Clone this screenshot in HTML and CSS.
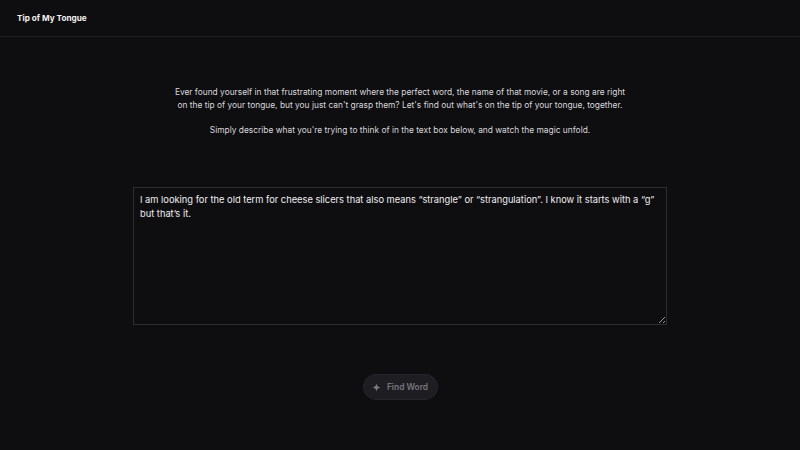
FILE: index.html
```html
<!DOCTYPE html>
<html>
<head>
<meta charset="utf-8">
<link rel="stylesheet" href="styles.css">
</head>
<body>
<header class="header"><span class="brand">Tip of My Tongue</span></header>
<main class="main">
  <div class="intro">
    <p>Ever found yourself in that frustrating moment where the perfect word, the name of that movie, or a song are right on the tip of your tongue, but you just can't grasp them? Let's find out what's on the tip of your tongue, together.</p>
    <p>Simply describe what you're trying to think of in the text box below, and watch the magic unfold.</p>
  </div>
  <textarea class="box">I am looking for the old term for cheese slicers that also means “strangle” or “strangulation”. I know it starts with a “g” but that’s it.</textarea>
  <button class="btn"><svg class="spark" width="9" height="9" viewBox="0 0 10 10"><path d="M5 0.5 Q5.6 4.4 9.5 5 Q5.6 5.6 5 9.5 Q4.4 5.6 0.5 5 Q4.4 4.4 5 0.5 Z" fill="#7a7980"/></svg>Find Word</button>
</main>
</body>
</html>
```
FILE: styles.css
```css
html, body { margin: 0; padding: 0; }
body {
  background: #0e0d10;
  color: #e8e8ea;
  font-family: Inter, "Noto Sans", sans-serif;
  width: 800px;
  height: 450px;
  overflow: hidden;
}
.header {
  height: 37px;
  border-bottom: 1px solid #1f1e22;
  display: flex;
  align-items: center;
  padding-left: 17px;
  box-sizing: border-box;
}
.brand { font-size: 8.2px; font-weight: 700; color: #f2f2f2; }
.main {
  display: flex;
  flex-direction: column;
  align-items: center;
}
.intro {
  width: 456px;
  margin-top: 49px;
  text-align: center;
  font-size: 8.4px;
  line-height: 13px;
  color: #d8d8dc;
}
.intro p { margin: 0 0 12px; }
.box {
  margin-top: 38px;
  width: 534px;
  height: 138px;
  box-sizing: border-box;
  background: #0e0d10;
  border: 1px solid #2c2b30;
  color: #eeeef0;
  font-family: Inter, "Noto Sans", sans-serif;
  font-size: 9.3px;
  line-height: 14px;
  padding: 5px 3px 5px 6px;
  resize: vertical;
  outline: none;
}
.btn {
  margin-top: 49px;
  height: 26px;
  width: 75px;
  border-radius: 13px;
  background: #1e1d21;
  border: 1px solid #26252a;
  color: #77767c;
  font-family: Inter, "Noto Sans", sans-serif;
  font-size: 8.4px;
  font-weight: 600;
  display: flex;
  align-items: center;
  justify-content: center;
  gap: 6px;
  padding: 0;
}
.spark { display: block; }
```
